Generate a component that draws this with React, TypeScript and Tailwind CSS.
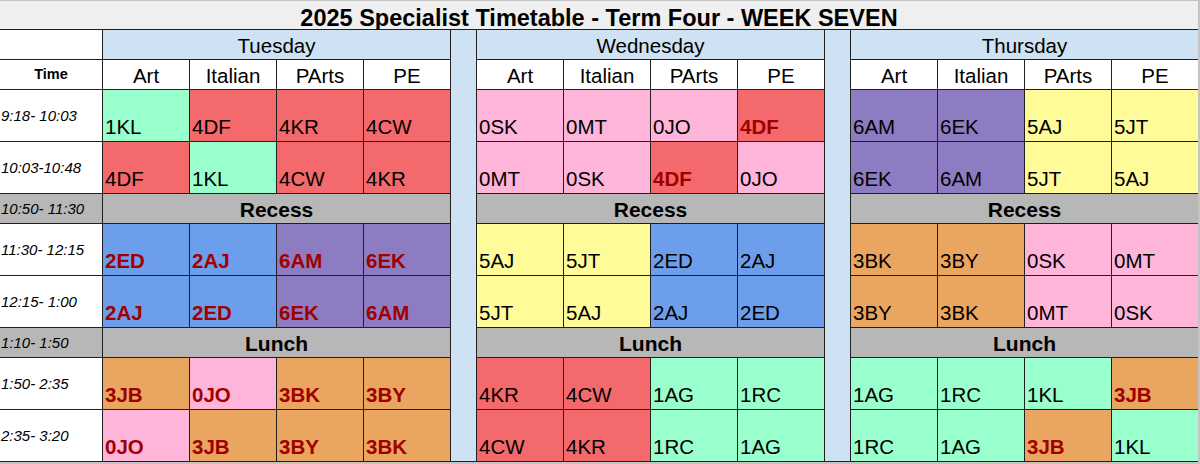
/**
 * Specialist Timetable
 * Spreadsheet-style weekly timetable for specialist lessons
 */

import React from 'react';

type Tone = 'mint' | 'red' | 'pink' | 'yellow' | 'blue' | 'purple' | 'orange';

interface Lesson {
  cls: string;
  tone: Tone;
  bold?: boolean;
}

// Cell colour mapping
const toneClass: Record<Tone, string> = {
  mint: 'bg-[#99ffcc]',
  red: 'bg-[#f4696b]',
  pink: 'bg-[#ffb4d9]',
  yellow: 'bg-[#fffb99]',
  blue: 'bg-[#6d9eeb]',
  purple: 'bg-[#8e7cc3]',
  orange: 'bg-[#eaa560]',
};

const days = ['Tuesday', 'Wednesday', 'Thursday'];
const subjects = ['Art', 'Italian', 'PArts', 'PE'];

// shorthand: 'cls:tone' with a trailing '!' for bold red text
const L = (s: string): Lesson => {
  const bold = s.endsWith('!');
  const [cls, tone] = s.replace('!', '').split(':');
  return { cls, tone: tone as Tone, bold };
};

type Row =
  | { kind: 'lesson'; time: string; cells: Lesson[][] }
  | { kind: 'break'; time: string; label: string };

const rows: Row[] = [
  {
    kind: 'lesson',
    time: '9:18- 10:03',
    cells: [
      ['1KL:mint', '4DF:red', '4KR:red', '4CW:red'].map(L),
      ['0SK:pink', '0MT:pink', '0JO:pink', '4DF:red!'].map(L),
      ['6AM:purple', '6EK:purple', '5AJ:yellow', '5JT:yellow'].map(L),
    ],
  },
  {
    kind: 'lesson',
    time: '10:03-10:48',
    cells: [
      ['4DF:red', '1KL:mint', '4CW:red', '4KR:red'].map(L),
      ['0MT:pink', '0SK:pink', '4DF:red!', '0JO:pink'].map(L),
      ['6EK:purple', '6AM:purple', '5JT:yellow', '5AJ:yellow'].map(L),
    ],
  },
  { kind: 'break', time: '10:50- 11:30', label: 'Recess' },
  {
    kind: 'lesson',
    time: '11:30- 12:15',
    cells: [
      ['2ED:blue!', '2AJ:blue!', '6AM:purple!', '6EK:purple!'].map(L),
      ['5AJ:yellow', '5JT:yellow', '2ED:blue', '2AJ:blue'].map(L),
      ['3BK:orange', '3BY:orange', '0SK:pink', '0MT:pink'].map(L),
    ],
  },
  {
    kind: 'lesson',
    time: '12:15- 1:00',
    cells: [
      ['2AJ:blue!', '2ED:blue!', '6EK:purple!', '6AM:purple!'].map(L),
      ['5JT:yellow', '5AJ:yellow', '2AJ:blue', '2ED:blue'].map(L),
      ['3BY:orange', '3BK:orange', '0MT:pink', '0SK:pink'].map(L),
    ],
  },
  { kind: 'break', time: '1:10- 1:50', label: 'Lunch' },
  {
    kind: 'lesson',
    time: '1:50- 2:35',
    cells: [
      ['3JB:orange!', '0JO:pink!', '3BK:orange!', '3BY:orange!'].map(L),
      ['4KR:red', '4CW:red', '1AG:mint', '1RC:mint'].map(L),
      ['1AG:mint', '1RC:mint', '1KL:mint', '3JB:orange!'].map(L),
    ],
  },
  {
    kind: 'lesson',
    time: '2:35- 3:20',
    cells: [
      ['0JO:pink!', '3JB:orange!', '3BY:orange!', '3BK:orange!'].map(L),
      ['4CW:red', '4KR:red', '1RC:mint', '1AG:mint'].map(L),
      ['1RC:mint', '1AG:mint', '3JB:orange!', '1KL:mint'].map(L),
    ],
  },
];

const TimeCell: React.FC<{ time: string; gray?: boolean }> = ({ time, gray }) => (
  <div
    className={`flex items-center pl-px text-[15px] italic leading-none ${
      gray ? 'bg-[#b7b7b7]' : 'bg-white'
    }`}
  >
    {time}
  </div>
);

const LessonCell: React.FC<{ lesson: Lesson }> = ({ lesson }) => (
  <div
    className={`flex items-end pl-[2px] pb-[4px] text-[20.5px] leading-none ${toneClass[lesson.tone]} ${
      lesson.bold ? 'font-bold text-[#a00000]' : 'text-black'
    }`}
  >
    {lesson.cls}
  </div>
);

export default function App() {
  return (
    <div className="w-[1200px] h-[464px] bg-[#c4c4c4] border-t border-[#c4c4c4] font-['Liberation_Sans',Arial,sans-serif] text-black">
      <div className="grid w-[1198px] gap-px pb-px bg-[#1f1f1f] grid-cols-[102px_repeat(4,86px)_25px_repeat(4,86px)_25px_repeat(4,86px)] grid-rows-[28px_29px_29px_51px_51px_29px_51px_51px_29px_51px_51px]">
        {/* title */}
        <div className="col-span-full flex items-end justify-center pb-px bg-[#efefef] text-[23.5px] font-bold leading-[20px]">
          2025 Specialist Timetable - Term Four - WEEK SEVEN
        </div>

        {/* spacer columns between days */}
        <div className="col-start-6 row-start-2 row-span-10 bg-[#cfe2f3]" />
        <div className="col-start-11 row-start-2 row-span-10 bg-[#cfe2f3]" />

        {/* day headers */}
        <div className="bg-white" />
        {days.map((day) => (
          <div
            key={day}
            className="col-span-4 flex items-end justify-center pb-[3px] bg-[#cfe2f3] text-[20.5px] leading-none"
          >
            {day}
          </div>
        ))}

        {/* subject headers */}
        <div className="flex items-center justify-center bg-white text-[14.5px] font-bold leading-none">
          Time
        </div>
        {days.map((day) =>
          subjects.map((subject) => (
            <div
              key={`${day}-${subject}`}
              className="flex items-end justify-center pb-[3px] bg-white text-[20.5px] leading-none"
            >
              {subject}
            </div>
          ))
        )}

        {rows.map((row) =>
          row.kind === 'break' ? (
            <React.Fragment key={row.time}>
              <TimeCell time={row.time} gray />
              {days.map((day) => (
                <div
                  key={`${row.time}-${day}`}
                  className="col-span-4 flex items-end justify-center pb-[3px] bg-[#b7b7b7] text-[21px] font-bold leading-none"
                >
                  {row.label}
                </div>
              ))}
            </React.Fragment>
          ) : (
            <React.Fragment key={row.time}>
              <TimeCell time={row.time} />
              {row.cells.map((dayCells, d) =>
                dayCells.map((lesson, i) => (
                  <LessonCell key={`${row.time}-${d}-${i}`} lesson={lesson} />
                ))
              )}
            </React.Fragment>
          )
        )}
      </div>
    </div>
  );
}
